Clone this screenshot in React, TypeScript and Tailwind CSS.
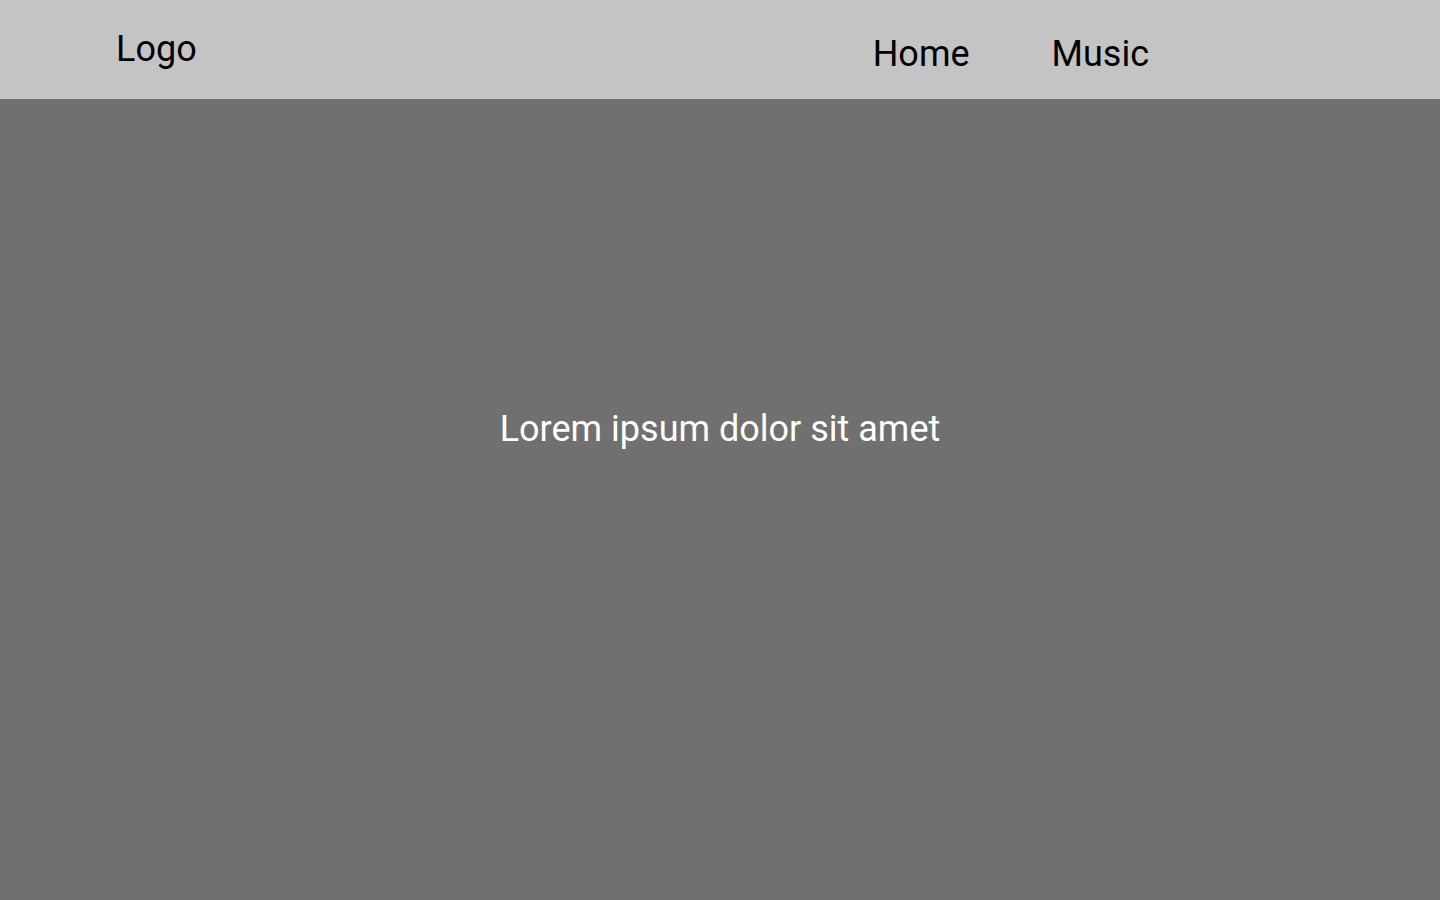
import * as React from "react";

const links = ["Home", "Music"];

export default function App() {
  return (
    <div className="flex min-h-screen flex-col bg-[#707070] font-['Roboto',sans-serif]">
      {/* Header */}
      <header className="flex h-[99px] items-start bg-[#c4c4c4] pl-[116px] pr-[291px]">
        <p className="pt-[31px] text-[36px] leading-none text-black">Logo</p>
        <nav className="ml-auto flex gap-[82px] pt-[36px]">
          {links.map((link) => (
            <a key={link} href="#" className="text-[36px] leading-none text-black">
              {link}
            </a>
          ))}
        </nav>
      </header>

      {/* Hero */}
      <main className="flex flex-1 justify-center pt-[312px]">
        <h1 className="text-[36px] font-normal leading-none text-white">
          Lorem ipsum dolor sit amet
        </h1>
      </main>
    </div>
  );
}
